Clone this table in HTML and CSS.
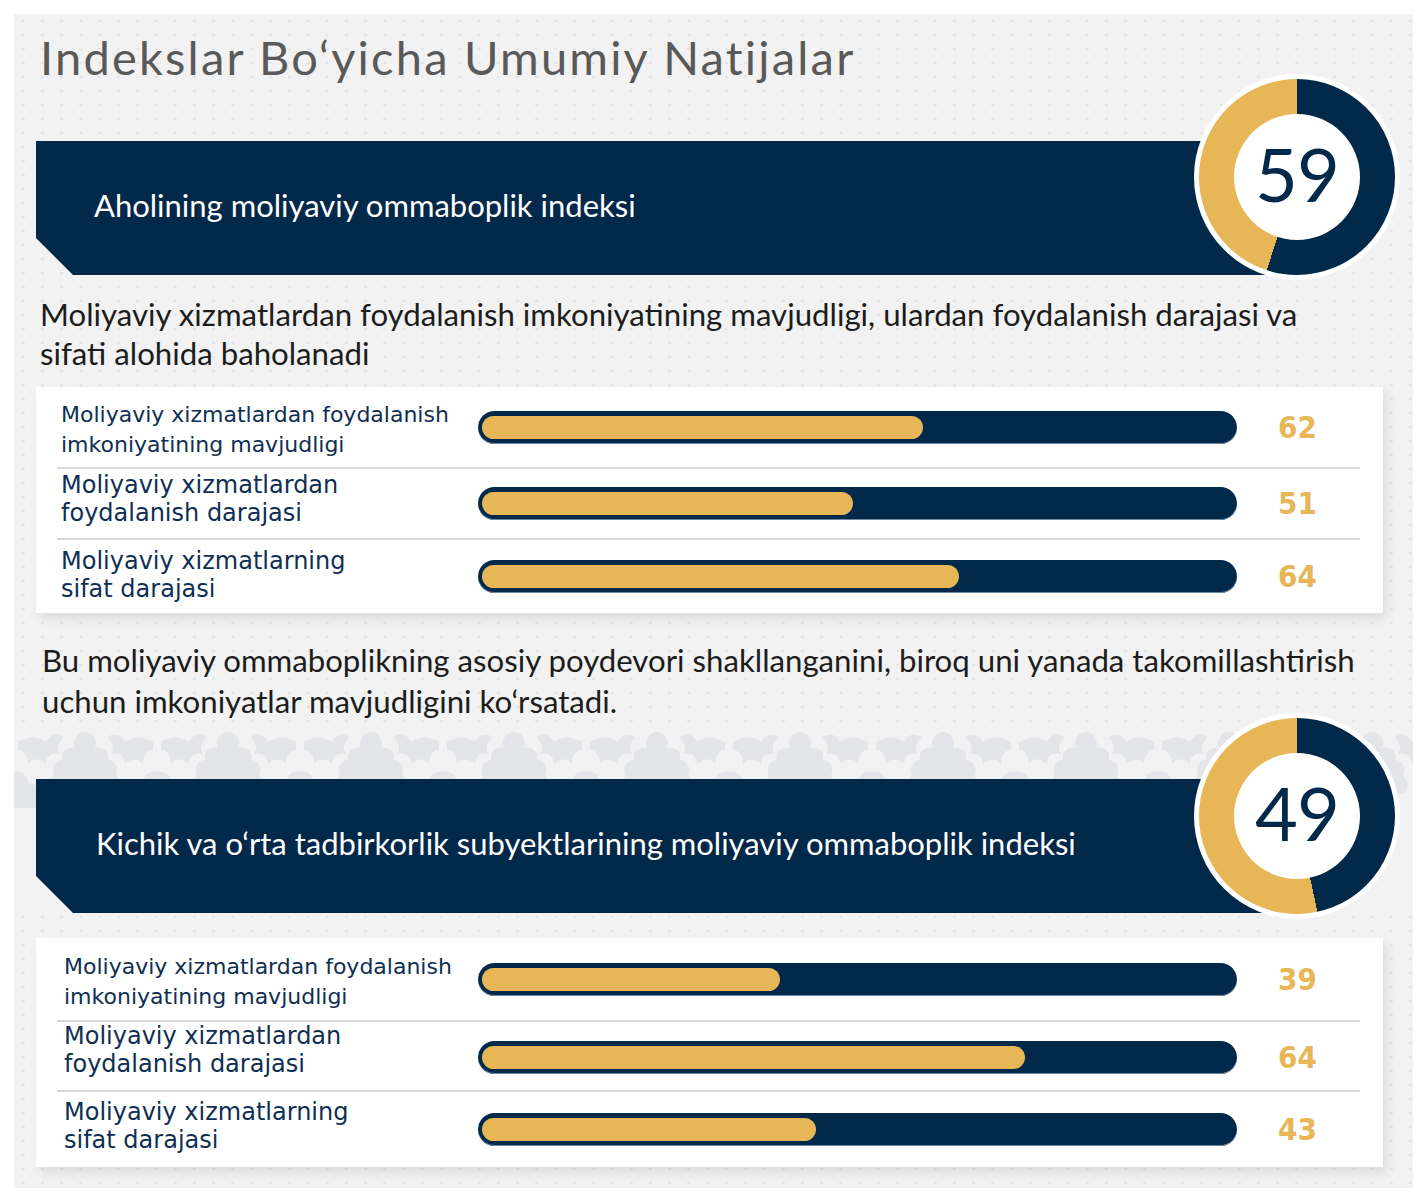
FILE: index.html
```html
<!DOCTYPE html>
<html lang="uz">
<head>
<meta charset="utf-8">
<title>Indekslar Bo‘yicha Umumiy Natijalar</title>
<link rel="stylesheet" href="styles.css">
</head>
<body>
<main class="panel">
  <h1 class="title">Indekslar Bo‘yicha Umumiy Natijalar</h1>

  <section class="hero hero-first">
    <div class="band"><span class="band-text">Aholining moliyaviy ommaboplik indeksi</span></div>
    <div class="donut" style="--navy-deg: 198deg"><div class="donut-hole">59</div></div>
  </section>

  <p class="lead lead-first">Moliyaviy xizmatlardan foydalanish imkoniyatining mavjudligi, ulardan foydalanish darajasi va sifati alohida baholanadi</p>

  <div class="card card-first">
    <div class="row row-a">
      <div class="label label-small">Moliyaviy xizmatlardan foydalanish imkoniyatining mavjudligi</div>
      <div class="track"><div class="fill" style="width: 58.7%"></div></div>
      <div class="value">62</div>
    </div>
    <div class="row row-b">
      <div class="label">Moliyaviy xizmatlardan<br>foydalanish darajasi</div>
      <div class="track"><div class="fill" style="width: 49.4%"></div></div>
      <div class="value">51</div>
    </div>
    <div class="row row-c">
      <div class="label">Moliyaviy xizmatlarning<br>sifat darajasi</div>
      <div class="track"><div class="fill" style="width: 63.5%"></div></div>
      <div class="value">64</div>
    </div>
  </div>

  <p class="lead lead-second">Bu moliyaviy ommaboplikning asosiy poydevori shakllanganini, biroq uni yanada takomillashtirish uchun imkoniyatlar mavjudligini ko‘rsatadi.</p>

  <section class="hero hero-second">
    <div class="band"><span class="band-text band-text-second">Kichik va o‘rta tadbirkorlik subyektlarining moliyaviy ommaboplik indeksi</span></div>
    <div class="donut" style="--navy-deg: 168deg"><div class="donut-hole">49</div></div>
  </section>

  <div class="card card-second">
    <div class="row row-a2">
      <div class="label label-small">Moliyaviy xizmatlardan foydalanish imkoniyatining mavjudligi</div>
      <div class="track"><div class="fill" style="width: 39.7%"></div></div>
      <div class="value">39</div>
    </div>
    <div class="row row-b2">
      <div class="label">Moliyaviy xizmatlardan<br>foydalanish darajasi</div>
      <div class="track"><div class="fill" style="width: 72.3%"></div></div>
      <div class="value">64</div>
    </div>
    <div class="row row-c2">
      <div class="label">Moliyaviy xizmatlarning<br>sifat darajasi</div>
      <div class="track"><div class="fill" style="width: 44.5%"></div></div>
      <div class="value">43</div>
    </div>
  </div>
</main>
</body>
</html>
```

FILE: styles.css
```css
* { box-sizing: border-box; }

html, body {
  margin: 0;
  padding: 0;
  background: #ffffff;
}

.panel {
  margin: 14px 15px 0 14px;
  width: 1399px;
  height: 1174px;
  background-color: #f2f2f2;
  background-image: radial-gradient(circle, #e2e5e8 1px, transparent 1.6px);
  background-size: 19px 14px;
  background-repeat: repeat;
  background-position: 0 0;
  overflow: hidden;
  font-family: Lato, "Open Sans", sans-serif;
  display: flex;
  flex-direction: column;
}

.title {
  margin: 15px 0 0 26px;
  font-family: Lato, sans-serif;
  font-weight: 400;
  font-size: 47px;
  line-height: 56px;
  color: #595959;
  letter-spacing: 2.2px;
}

.hero {
  position: relative;
  margin-left: 22px;
}

.hero-first {
  margin-top: 56px;
}

.hero-second {
  margin-top: 6px;
  margin-left: 0;
  padding-left: 22px;
  padding-top: 51px;
  background-image: url("data:image/svg+xml,%3Csvg xmlns='http://www.w3.org/2000/svg' width='143' height='82' viewBox='0 0 143 82'%3E%3Cg fill='%23e3e5e9'%3E%3Cpath d='M4 14 C14 8 24 8 32 14 C36 6 44 4 50 10 C44 14 42 20 46 26 C38 24 32 28 32 36 C26 30 18 30 14 36 C14 28 10 22 4 22 Z'/%3E%3Cpath d='M139 14 C129 8 119 8 111 14 C107 6 99 4 93 10 C99 14 101 20 97 26 C105 24 111 28 111 36 C117 30 125 30 129 36 C129 28 133 22 139 22 Z'/%3E%3Cpath d='M71 4 C79 4 84 12 81 20 C89 18 96 24 94 32 C101 32 106 40 102 48 C108 52 108 62 102 66 L92 66 C90 58 84 54 78 56 C80 64 78 72 74 78 L68 78 C64 72 62 64 64 56 C58 54 52 58 50 66 L40 66 C34 62 34 52 40 48 C36 40 41 32 48 32 C46 24 53 18 61 20 C58 12 63 4 71 4 Z'/%3E%3Cpath d='M0 44 C8 42 14 48 14 56 C20 54 26 60 24 68 L24 80 L0 80 Z'/%3E%3Cpath d='M143 44 C135 42 129 48 129 56 C123 54 117 60 119 68 L119 80 L143 80 Z'/%3E%3C/g%3E%3C/svg%3E");
  background-color: #f2f2f2;
  background-repeat: repeat-x;
  background-size: 143px 82px;
  background-position: 0 0;
}

.band {
  width: 1264px;
  height: 134px;
  background: #02284a;
  clip-path: polygon(0 0, 100% 0, 100% 100%, 37px 100%, 0 calc(100% - 37px));
  display: flex;
  align-items: center;
  padding-left: 58px;
  padding-bottom: 6px;
}

.band-text {
  color: #ffffff;
  font-family: Lato, sans-serif;
  font-size: 31px;
  line-height: 38px;
}

.band-text-second {
  margin-left: 2px;
}

.donut {
  position: absolute;
  top: -67px;
  right: 13px;
  width: 206px;
  height: 206px;
  border-radius: 50%;
  border: 5px solid #ffffff;
  background: conic-gradient(#02284a 0deg var(--navy-deg), #e6b657 var(--navy-deg) 360deg);
  display: flex;
  align-items: center;
  justify-content: center;
}

.hero-second .donut {
  top: -15px;
}

.donut-hole {
  width: 126px;
  height: 126px;
  border-radius: 50%;
  background: #ffffff;
  color: #02284a;
  font-family: Lato, sans-serif;
  font-size: 74px;
  line-height: 1;
  letter-spacing: -1px;
  display: flex;
  align-items: center;
  justify-content: center;
  padding-bottom: 6px;
}

.lead {
  margin: 0;
  color: #1c1c1c;
  font-family: Lato, sans-serif;
  font-size: 31.2px;
  line-height: 39px;
}

.lead-first {
  margin: 20px 0 0 26px;
  width: 1300px;
}

.lead-second {
  margin: 27px 0 0 28px;
  width: 1340px;
  line-height: 41px;
}

.card {
  margin: 14px 30px 0 22px;
  background: #ffffff;
  box-shadow: 4px 6px 10px rgba(0, 0, 0, 0.09);
  display: flex;
  flex-direction: column;
}

.card-second {
  margin-top: 25px;
}

.row {
  margin: 0 23px 0 21px;
  padding-left: 4px;
  display: grid;
  grid-template-columns: 417px 759px 1fr;
  align-items: center;
}

.row + .row {
  border-top: 2px solid #d9d9d9;
}

.row-a { height: 80px; }
.row-b { height: 71px; }
.row-c { height: 75px; }
.row-a2 { height: 82px; }
.row-b2 { height: 70px; }
.row-c2 { height: 77px; }

.card-second .label {
  padding-left: 3px;
}

.label {
  color: #0f2f52;
  font-family: "DejaVu Sans", sans-serif;
  font-size: 24px;
  line-height: 28px;
  white-space: nowrap;
}

.row-b .label { padding-bottom: 10px; }
.row-c .label { padding-bottom: 4px; }
.row-b2 .label { padding-bottom: 14px; }
.row-c2 .label { padding-bottom: 8px; }

.label.label-small {
  font-size: 22px;
  line-height: 30px;
  white-space: normal;
  padding-top: 6px;
}

.track {
  height: 33px;
  border-radius: 17px;
  background: #02284a;
  padding: 5px 4px;
  box-shadow: inset 0 -1px 0 #6f8aa3;
}

.fill {
  height: 23px;
  border-radius: 12px;
  background: #e6b657;
}

.value {
  padding-left: 41px;
  color: #e6b657;
  font-family: "DejaVu Sans Condensed", "DejaVu Sans", sans-serif;
  font-weight: 700;
  font-size: 31px;
  line-height: 1;
}
```
